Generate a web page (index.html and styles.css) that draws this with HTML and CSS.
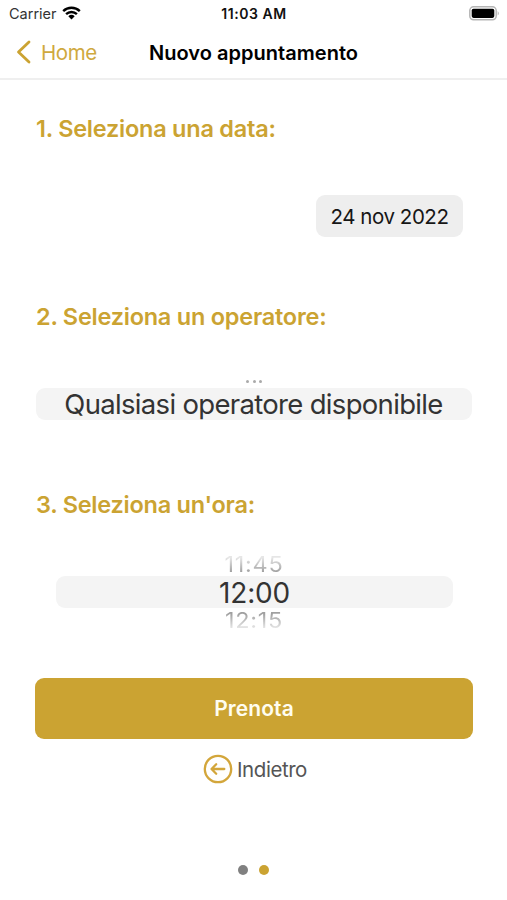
FILE: index.html
```html
<!DOCTYPE html>
<html lang="it">
<head>
<meta charset="utf-8">
<title>Nuovo appuntamento</title>
<link rel="stylesheet" href="styles.css">
</head>
<body>
<div class="screen">
  <div class="status">
    <div class="carrier"><span>Carrier</span>
      <svg class="wifi" width="19" height="14" viewBox="0 0 19 14"><path d="M1.2 5.1A12 12 0 0 1 17.8 5.1M4.1 8.1A7.8 7.8 0 0 1 14.9 8.1" fill="none" stroke="#000" stroke-width="2.4"/><path d="M6.3 10.2A4.7 4.7 0 0 1 12.7 10.2L9.5 13.5Z"/></svg>
    </div>
    <span class="clock">11:03 AM</span>
    <svg class="battery" width="31" height="15" viewBox="0 0 31 15"><rect x=".8" y=".8" width="26.4" height="13" rx="3.8" fill="#fff" stroke="#b5b5b5" stroke-width="1.5"/><rect x="2.7" y="2.7" width="22.6" height="9.2" rx="1.8"/><path d="M28.7 5Q31 7.3 28.7 9.6Z" fill="#b5b5b5"/></svg>
  </div>
  <header class="nav">
    <a class="home"><svg width="15" height="24" viewBox="0 0 15 24"><path d="M13 2 2.5 12 13 22" fill="none" stroke="#cba332" stroke-width="2.8" stroke-linecap="round" stroke-linejoin="round"/></svg><span>Home</span></a>
    <h1><span>Nuovo appuntamento</span></h1>
  </header>
  <main>
    <section class="date">
      <h2><span>1. Seleziona una data:</span></h2>
      <div class="pill"><span>24 nov 2022</span></div>
    </section>
    <section class="operator">
      <h2><span>2. Seleziona un operatore:</span></h2>
      <div class="more"><i></i><i></i><i></i></div>
      <div class="choice"><span>Qualsiasi operatore disponibile</span></div>
    </section>
    <section class="time">
      <h2><span>3. Seleziona un'ora:</span></h2>
      <div class="side before"><span>11:45</span></div>
      <div class="choice hour"><span>12:00</span></div>
      <div class="side after"><span>12:15</span></div>
    </section>
    <button class="book"><span>Prenota</span></button>
    <a class="back"><svg width="30" height="30" viewBox="0 0 30 30" fill="none" stroke="#d3a63b" stroke-linecap="round" stroke-linejoin="round"><circle cx="15" cy="15" r="13.2" stroke-width="2.3"/><path d="M21.3 15H9M13.2 10.3 8.5 15l4.7 4.7" stroke-width="2.3"/></svg><span>Indietro</span></a>
  </main>
  <div class="pages"><i></i><i class="active"></i></div>
</div>
</body>
</html>
```
FILE: styles.css
```css
* { box-sizing: border-box; }
body { margin: 0; background: #fff; font-family: Inter, "Liberation Sans", sans-serif; color: #000; }
svg { display: block; flex: none; }
h1, h2 { margin: 0; white-space: nowrap; }
.screen { height: 900px; display: flex; flex-direction: column; overflow: hidden; }
.status { height: 28px; flex: none; display: grid; grid-template-columns: 1fr auto 1fr; padding: 0 7px 0 9px; align-items: center; }
.carrier { display: flex; align-items: center; gap: 6px; font-size: 14.5px; color: #333; }
.carrier span { margin-top: -1px; }
.wifi { margin: -3px 0 0 -1px; }
.clock { font-size: 14px; font-weight: 600; letter-spacing: 0.55px; color: #111; margin: -1px 0 0 -1px; }
.battery { justify-self: end; margin-top: -1px; }
.nav { height: 52px; flex: none; display: grid; grid-template-columns: 1fr auto 1fr; align-items: center; border-bottom: 2px solid #efefef; padding: 0 0 2px 16px; }
.nav h1 { font-size: 20px; font-weight: 600; letter-spacing: 0.03px; margin: 1px 0 0 -16px; }
.home { display: flex; align-items: center; gap: 10px; color: #cfa93f; font-size: 20.5px; letter-spacing: -0.4px; }
main { padding: 35px 35px 0 36px; display: flex; flex-direction: column; }
section { height: 188px; }
h2 { height: 28px; line-height: 28px; font-size: 23.5px; font-weight: 580; letter-spacing: -0.24px; color: #cba332; }
.pill { width: 147px; height: 42px; margin: 52px 9px 0 auto; border-radius: 9px; background: #eee; display: flex; align-items: center; justify-content: center; font-size: 20.5px; letter-spacing: -0.45px; color: #161616; }
.more { display: flex; justify-content: center; gap: 3.4px; margin-top: 49px; height: 8px; }
.more i { width: 3px; height: 3px; border-radius: 50%; background: #aaa; }
.choice { height: 32px; border-radius: 9px; background: #f4f4f4; color: #333; display: flex; align-items: center; justify-content: center; font-size: 27.5px; letter-spacing: -0.68px; white-space: nowrap; }
.operator .choice span { margin-left: -1px; }
.hour { margin: 0 19px 0 20px; font-size: 28px; letter-spacing: -0.2px; line-height: 28px; }
.hour span { margin-top: 1px; }
.side { display: flex; justify-content: center; height: 22px; font-size: 23.5px; line-height: 20px; letter-spacing: 0.7px; }
.side span { height: 20px; padding: 0 1px; transform: scaleY(.9); -webkit-background-clip: text; background-clip: text; color: transparent; }
.before { margin-top: 35px; }
.before span { margin-top: 1px; background-image: linear-gradient(#e6e6e6 10%, #a0a0a0 90%); }
.after span { margin-top: 3px; background-image: linear-gradient(#a0a0a0 10%, #e6e6e6 90%); }
.book { height: 61px; margin: -1px -1px 0; border: 0; border-radius: 9px; background: #cba332; color: #fffdf0; font: 600 21px Inter, sans-serif; letter-spacing: 0.1px; padding: 0; }
.back { display: flex; justify-content: center; align-items: center; gap: 4px; margin: 15px 0 0 2px; color: #555; font-size: 20.5px; letter-spacing: -0.45px; }
.pages { margin: auto 0 25px; display: flex; justify-content: center; gap: 11px; }
.pages i { width: 10px; height: 10px; border-radius: 50%; background: #808080; }
.pages .active { background: #cba332; }
```
